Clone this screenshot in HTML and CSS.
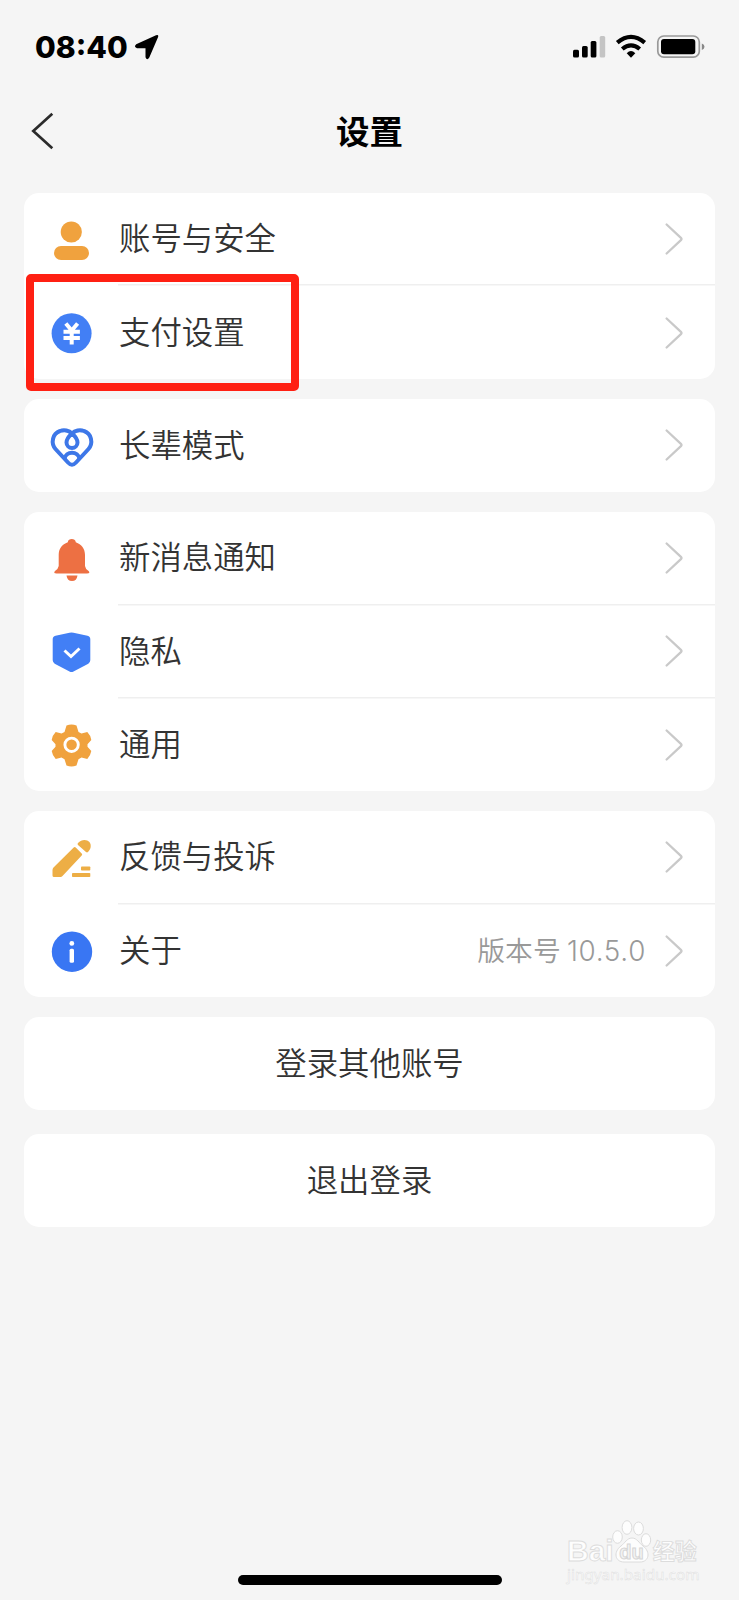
FILE: index.html
```html
<!DOCTYPE html>
<html lang="zh-CN">
<head>
<meta charset="utf-8">
<title>设置</title>
<link rel="stylesheet" href="styles.css">
</head>
<body>
<svg class="defs" width="0" height="0"><defs>
<symbol id="chev" viewBox="0 0 20 34"><path d="M2.6 2.500l14.300 13.300q1.200 1.200 0 2.400L2.600 31.500" fill="none" stroke="#c9c9c9" stroke-width="2.300" stroke-linecap="round"/></symbol>
</defs></svg>
<div class="screen">
<header class="status">
<span class="time">08:40</span>
<svg class="loc" width="26" height="26" viewBox="0 0 26 26"><path d="M2.200 10.200L22 1.200q3-1 2 2L15.300 23.500q-2.300 3.500-3.800-.3V14.200H3q-3.700-1.200-.8-4z"/></svg>
<svg class="signals" width="134" height="26" viewBox="572 34 134 26">
<rect x="573" y="49.700" width="6" height="7.800" rx="1.500"/><rect x="582" y="46" width="5.700" height="11.500" rx="1.500"/><rect x="590.700" y="41" width="5.700" height="16.500" rx="1.500"/><rect x="599.700" y="36" width="5.500" height="21.500" rx="1.500" fill="#c4c4c4"/>
<g fill="none" stroke="#000" stroke-width="4.200"><path d="M617.300 42.700q13.700-11.600 27.400 0"/><path d="M622.300 49q8.700-7.200 17.400 0"/></g><path d="M626.700 53.200q4.300-4.200 8.600 0L631 57.700z"/>
<rect x="657.800" y="36" width="41.500" height="21.200" rx="6" fill="none" stroke="#999" stroke-width="1.700"/><rect x="661" y="39" width="34.300" height="15.200" rx="3"/><path d="M701.800 43.500q2.700 1 2.700 3.200t-2.700 3.200z" fill="#888"/>
</svg>
</header>
<nav class="nav">
<svg class="back" width="30" height="40" viewBox="28 111 30 40"><path d="M52.300 113.700L33.300 131l19 17.200" fill="none" stroke="#2b2b2b" stroke-width="2.700"/></svg>
<h1>设置</h1>
</nav>
<main class="list">
<section class="card">
<div class="row short"><svg class="icon" viewBox="0 0 94 91" fill="#f0a23e"><circle cx="47.300" cy="39" r="10.600"/><rect x="30" y="53" width="35" height="14" rx="7"/></svg><div class="cell"><span>账号与安全</span><svg class="chev"><use href="#chev"/></svg></div></div>
<div class="row pay"><svg class="icon" viewBox="0 0 94 94.500"><circle cx="47.600" cy="49.300" r="20" fill="#427ff5"/><path d="M41.800 39.500l5.900 7 5.900-7M39.500 47.800h16.400M39.500 54h16.400M47.700 46.500v14" fill="none" stroke="#fff" stroke-width="4"/></svg><div class="cell"><span>支付设置</span><svg class="chev"><use href="#chev"/></svg></div><div class="highlight"></div></div>
</section>
<section class="card">
<div class="row"><svg class="icon" viewBox="0 0 94 93" fill="none" stroke="#3d77e8" stroke-width="4"><path d="M48 34.500C51 31.500 56 30.500 60 32C67.500 34.500 69.500 44 64.500 50L52 63.500Q48 68 44 63.500L31.500 50C26.500 44 28.500 34.500 36 32C40 30.500 45 31.500 48 34.500C52 38 53.500 41 53.500 43.500A5.500 5.500 0 0 1 42.500 43.500C42.500 41 44 38 48 34.500"/><path d="M40.500 60C41.500 51.500 54.500 51.500 55.500 60"/></svg><div class="cell"><span>长辈模式</span><svg class="chev"><use href="#chev"/></svg></div></div>
</section>
<section class="card">
<div class="row first"><svg class="icon" viewBox="0 0 94 92" fill="#ed7043"><path d="M34.700 54V43C34.700 36.500 38 32.500 43.800 30.300C44 26 51.500 26 51.800 30.300C57.500 32.500 61 36.500 61 43V54q.5 3.500 3.600 5q2 2.500-1.600 2.500H32.500q-3.500 0-1.500-2.500q3-1.500 3.700-5z"/><path d="M42.500 63.500h11q-.8 5.500-5.500 5.500T42.500 63.500z"/></svg><div class="cell"><span>新消息通知</span><svg class="chev"><use href="#chev"/></svg></div></div>
<div class="row"><svg class="icon" viewBox="0 0 94 93"><path d="M45.500 28.800q2-.6 4 0L63.500 31.800q2.800.8 2.800 3.500V56.300q0 2-2 3.400L49.500 67.600q-2 1-4 0L30.700 59.700q-2-1.400-2-3.400V35.300q0-2.700 2.800-3.500z" fill="#427ff5"/><path d="M40.500 46.500l6.500 6 8.500-8" fill="none" stroke="#fff" stroke-width="3"/></svg><div class="cell"><span>隐私</span><svg class="chev"><use href="#chev"/></svg></div></div>
<div class="row"><svg class="icon" viewBox="0 0 94 94"><path d="M42.500 28.500q5-1.800 10 0l2 6.400 3 1.700 5.800-1.500q3.500 3.500 4 8l-3.800 4.100v2.600l3.800 4.200q-.7 4.500-4 8l-5.800-1.400-3 1.700-2 6.200q-5 1.800-10 0l-2-6.200-3-1.700L31.700 62q-3.300-3.500-4-8l3.800-4.200v-2.600l-3.800-4.100q.5-4.500 4-8l5.800 1.500 3-1.700z" fill="#f0a23e"/><circle cx="47.600" cy="47.800" r="6.700" fill="none" stroke="#fff" stroke-width="2.900"/></svg><div class="cell"><span>通用</span><svg class="chev"><use href="#chev"/></svg></div></div>
</section>
<section class="card">
<div class="row first"><svg class="icon" viewBox="0 0 94 92" fill="#edae45"><path d="M49.700 36.600q1-1 2 0l6 6q1 1 0 2L38.500 65q-.8 1-2 1H30q-1.500 0-1.500-1.500V59q0-1.500 1-2.500zM54 32c5-5.500 14.500-3 12.500 5q-.7 2-2.500 4-1 .8-2 0l-8-7q-1-1 0-2z"/><rect x="57" y="55.500" width="9.300" height="4" rx=".8"/><rect x="48" y="62" width="18.300" height="4" rx=".8"/></svg><div class="cell"><span>反馈与投诉</span><svg class="chev"><use href="#chev"/></svg></div></div>
<div class="row last-row"><svg class="icon" viewBox="0 0 94 94"><circle cx="48" cy="48.700" r="20.200" fill="#3976f3"/><circle cx="47.800" cy="40.400" r="2.400" fill="#fff"/><rect x="45.600" y="45.700" width="4.400" height="14" rx="1.500" fill="#fff"/></svg><div class="cell"><span>关于</span><span class="version">版本号 <span class="num">10.5.0</span></span><svg class="chev"><use href="#chev"/></svg></div></div>
</section>
<section class="card action">登录其他账号</section>
<section class="card action last">退出登录</section>
</main>
<div class="home"></div>
<div class="mark">
<div class="brand"><span class="bai">Bai</span><svg width="40" height="44" viewBox="0 0 40 44"><g fill="#fdfdfd" stroke="#dcdcdc" stroke-width="1"><ellipse cx="5.500" cy="18" rx="4.800" ry="6.300"/><ellipse cx="15" cy="8.500" rx="4.900" ry="6.800"/><ellipse cx="26.500" cy="9.500" rx="4.900" ry="6.500"/><ellipse cx="34" cy="21" rx="4.700" ry="6.300"/><path d="M20 19c-5 0-7 5-11 8-8 6-6 16 3 16h16c9 0 11-10 3-16-4-3-6-8-11-8z"/></g><text class="du" x="19.500" y="39.500" text-anchor="middle">du</text></svg><span class="jy">经验</span></div>
<div class="url">jingyan.baidu.com</div>
</div>
</div>
</body>
</html>
```
FILE: styles.css
```css
* { box-sizing: border-box; }
body { margin: 0; background: #f5f5f5; }
.defs { position: absolute; }
.screen {
  position: relative;
  height: 1600px;
  overflow: hidden;
  background: #f5f5f5;
  color: #333;
  font-family: "Noto Sans CJK SC", sans-serif;
}
.status { display: flex; align-items: center; height: 94px; padding: 0 33px 0 35px; color: #000; }
.time { width: 99px; font: 800 30px/36px Inter, "Noto Sans CJK SC", sans-serif; white-space: nowrap; }
.signals { margin-left: auto; }
.nav { display: grid; grid-template-columns: 60px 1fr 60px; align-items: center; height: 74px; }
.back { margin-left: 28px; }
.nav h1 { margin: 0; padding-bottom: 3px; font-size: 33.5px; line-height: 48px; font-weight: 700; text-align: center; color: #000; }
.list { display: flex; flex-direction: column; gap: 20px; padding: 25px 24px 0; }
.card { background: #fff; border-radius: 15px; }
.row { display: flex; height: 93px; }
.short { height: 91px; }
.first { height: 92px; }
.pay { height: 94.5px; position: relative; }
.row:last-child:nth-child(3), .last-row { height: 94px; }
.icon { width: 94px; height: 100%; flex: none; }
.cell { display: flex; flex: 1; align-items: center; padding: 0 31px 0 1px; font-size: 31.4px; line-height: 46px; font-weight: 350; }
.cell > span:first-child { margin-top: -3px; }
.row + .row .cell { padding-top: 2px; }
.row.pay .cell { padding-top: 3px; }
.row + .row { background: linear-gradient(#efefef, #efefef) 94px 0 / 100% 1.5px no-repeat; }
.chev { width: 20px; height: 34px; margin-left: auto; }
.highlight { position: absolute; left: 2px; top: -10px; width: 273px; height: 117px; border: 8px solid #ff2013; border-radius: 5px; }
.version { margin: -2px 0 0 auto; font-size: 27.8px; color: #999; white-space: nowrap; }
.version + .chev { margin-left: 18px; }
.num { font-family: Inter, sans-serif; font-weight: 300; letter-spacing: .7px; }
.action { height: 93px; padding-bottom: 4px; display: flex; align-items: center; justify-content: center; font-size: 31.4px; font-weight: 350; }
.last { margin-top: 4px; }
.home { position: absolute; left: 238px; top: 1575px; width: 264px; height: 10px; border-radius: 5px; background: #000; }
.mark { position: absolute; left: 567px; top: 1519px; color: #fdfdfd; }
.brand { display: flex; align-items: flex-end; height: 44px; font: 700 30px/34px "Liberation Sans", sans-serif; -webkit-text-stroke: .9px #dcdcdc; }
.bai { margin: 0 -2px -5px 0; }
.brand .jy { margin: 0 0 -2px 1px; font: 700 22px/32px "Noto Sans CJK SC", sans-serif; }
.du { font: 700 20px "Liberation Sans", sans-serif; fill: #f3f3f3; stroke: #d6d6d6; stroke-width: 1px; -webkit-text-stroke: 1px #d6d6d6; }
.url { margin-top: 1px; font: 15.3px/20px "Noto Sans", sans-serif; -webkit-text-stroke: .5px #dedede; }
```
